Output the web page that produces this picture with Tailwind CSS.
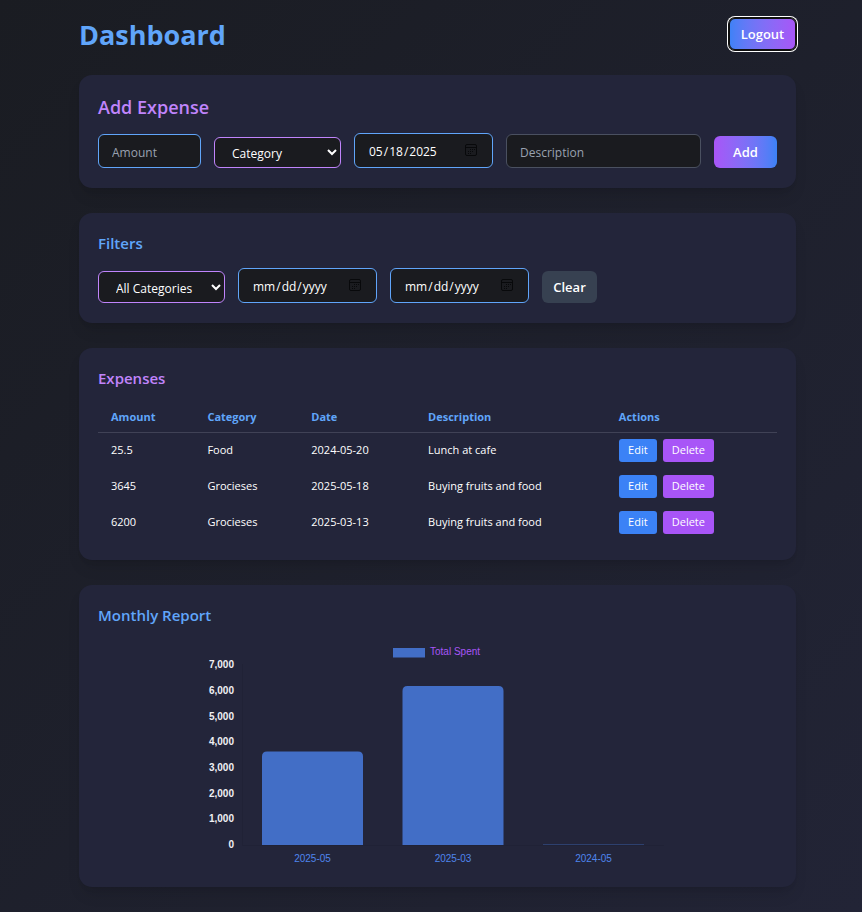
<!DOCTYPE html>
<html lang="en">
<head>
<meta charset="utf-8">
<meta name="viewport" content="width=device-width, initial-scale=1">
<title>Dashboard</title>
<script src="https://cdn.jsdelivr.net/npm/@tailwindcss/browser@4"></script>
</head>
<body class="min-h-screen bg-linear-to-br from-[#1a1c22] to-[#222436] font-['Open_Sans','Noto_Sans',sans-serif] text-[12px] text-white">
<svg class="hidden" aria-hidden="true">
  <symbol id="calendar" viewBox="0 0 14 14">
    <g fill="none" stroke="#08090b"><rect x="1.500" y="1.500" width="11" height="11" rx="1.500"/><path d="M1.500 4.500H12.500"/></g>
    <path fill="#08090b" d="M6 6h1v1H6zM8 6h1v1H8zM10 6h1v1h-1zM4 8h1v1H4zM6 8h1v1H6zM8 8h1v1H8zM4 10h1v1H4zM6 10h1v1H6z"/>
  </symbol>
</svg>
<div class="flex flex-col gap-[25px] pt-[18px] pr-[66px] pb-[25px] pl-[79px]">
  <header class="flex h-8 items-center justify-between">
    <h1 class="pt-[2px] text-[27px] leading-8 font-bold text-[#60a5fa]">Dashboard</h1>
    <button type="button" class="h-8 w-[67px] rounded-md border border-[#101010] bg-linear-to-r from-[#3b82f6] to-[#a855f7] bg-origin-border pt-[2px] text-[13px] font-semibold shadow-[0_0_0_1px_#101010,0_0_0_2px_#ffffff]">Logout</button>
  </header>

  <section class="rounded-[13px] bg-[#23253a] px-[19px] pt-[19px] pb-5 shadow-lg">
    <h2 class="mb-[13px] text-[18px] leading-[26px] font-semibold text-[#c084fc]">Add Expense</h2>
    <form class="flex items-end gap-[13px]">
      <input type="number" aria-label="Amount" placeholder="Amount" class="h-[34px] w-[103px] rounded-md border border-[#60a5fa] bg-[#1a1b1f] px-[13px] pt-[2px] placeholder:text-[#99a1af]">
      <select aria-label="Category" class="h-[31px] w-[127px] rounded-md border border-[#c084fc] bg-[#1a1b1f] pt-[2px] pl-[13px]">
        <option>Category</option><option>Food</option><option>Grocieses</option>
      </select>
      <div class="relative">
        <input type="date" aria-label="Date" value="2025-05-18" class="block h-[35px] w-[139px] rounded-md border border-[#60a5fa] bg-[#1a1b1f] px-[13px] pt-[2px] [&::-webkit-calendar-picker-indicator]:opacity-0">
        <svg class="pointer-events-none absolute top-[10px] right-[15px] size-[14px]" aria-hidden="true"><use href="#calendar"/></svg>
      </div>
      <input type="text" aria-label="Description" placeholder="Description" class="h-[34px] min-w-0 flex-1 rounded-md border border-[#4a5060] bg-[#1a1b1f] px-[13px] pt-[2px] placeholder:text-[#99a1af]">
      <button type="submit" class="h-8 w-[63px] rounded-md bg-linear-to-r from-[#a855f7] to-[#3b82f6] pt-[2px] text-[13px] font-semibold">Add</button>
    </form>
  </section>

  <section class="rounded-[13px] bg-[#23253a] px-[19px] pt-[19px] pb-5 shadow-lg">
    <h2 class="mb-[13px] text-[15px] leading-[23px] font-semibold text-[#60a5fa]">Filters</h2>
    <div class="flex items-end gap-[13px]">
      <select aria-label="Filter by category" class="h-8 w-[127px] rounded-md border border-[#c084fc] bg-[#1a1b1f] pt-[2px] pl-[13px]">
        <option>All Categories</option><option>Food</option><option>Grocieses</option>
      </select>
      <div class="relative">
        <input type="date" aria-label="From date" class="block h-[35px] w-[139px] rounded-md border border-[#60a5fa] bg-[#1a1b1f] px-[13px] pt-[2px] [&::-webkit-calendar-picker-indicator]:opacity-0">
        <svg class="pointer-events-none absolute top-[10px] right-[15px] size-[14px]" aria-hidden="true"><use href="#calendar"/></svg>
      </div>
      <div class="relative">
        <input type="date" aria-label="To date" class="block h-[35px] w-[139px] rounded-md border border-[#60a5fa] bg-[#1a1b1f] px-[13px] pt-[2px] [&::-webkit-calendar-picker-indicator]:opacity-0">
        <svg class="pointer-events-none absolute top-[10px] right-[15px] size-[14px]" aria-hidden="true"><use href="#calendar"/></svg>
      </div>
      <button type="button" class="h-8 w-[55px] rounded-md bg-[#374151] pt-[2px] text-[13px] font-semibold">Clear</button>
    </div>
  </section>

  <section class="rounded-[13px] bg-[#23253a] px-[19px] pt-[19px] pb-5 shadow-lg">
    <h2 class="mb-[13px] text-[15px] leading-[23px] font-semibold text-[#c084fc]">Expenses</h2>
    <table class="w-full table-fixed border-collapse text-left text-[11px]">
      <thead>
        <tr class="h-[29px] border-b border-[#404256] text-[#60a5fa]">
          <th class="w-[14.2%] px-[13px] font-bold">Amount</th>
          <th class="w-[15.3%] px-[13px] font-bold">Category</th>
          <th class="w-[17.2%] px-[13px] font-bold">Date</th>
          <th class="w-[28.1%] px-[13px] font-bold">Description</th>
          <th class="px-[13px] font-bold">Actions</th>
        </tr>
      </thead>
      <tbody>
        <tr class="h-9">
          <td class="px-[13px]">25.5</td><td class="px-[13px]">Food</td><td class="px-[13px]">2024-05-20</td><td class="px-[13px]">Lunch at cafe</td>
          <td class="px-[13px]"><div class="flex gap-[6px]"><button type="button" class="h-[23px] w-[38px] rounded-[3px] bg-[#3b82f6]">Edit</button><button type="button" class="h-[23px] w-[51px] rounded-[3px] bg-[#a855f7]">Delete</button></div></td>
        </tr>
        <tr class="h-9">
          <td class="px-[13px]">3645</td><td class="px-[13px]">Grocieses</td><td class="px-[13px]">2025-05-18</td><td class="px-[13px]">Buying fruits and food</td>
          <td class="px-[13px]"><div class="flex gap-[6px]"><button type="button" class="h-[23px] w-[38px] rounded-[3px] bg-[#3b82f6]">Edit</button><button type="button" class="h-[23px] w-[51px] rounded-[3px] bg-[#a855f7]">Delete</button></div></td>
        </tr>
        <tr class="h-9">
          <td class="px-[13px]">6200</td><td class="px-[13px]">Grocieses</td><td class="px-[13px]">2025-03-13</td><td class="px-[13px]">Buying fruits and food</td>
          <td class="px-[13px]"><div class="flex gap-[6px]"><button type="button" class="h-[23px] w-[38px] rounded-[3px] bg-[#3b82f6]">Edit</button><button type="button" class="h-[23px] w-[51px] rounded-[3px] bg-[#a855f7]">Delete</button></div></td>
        </tr>
      </tbody>
    </table>
  </section>

  <section class="rounded-[13px] bg-[#23253a] px-[19px] pt-[19px] pb-5 shadow-lg">
    <h2 class="mb-[13px] text-[15px] leading-[23px] font-semibold text-[#60a5fa]">Monthly Report</h2>
    <svg viewBox="0 0 461 227" role="img" aria-label="Total spent per month" class="mx-auto block w-full max-w-[461px] font-['Liberation_Sans',Arial,sans-serif] text-[10px]">
      <rect x="186" y="8" width="32" height="9.5" fill="#426ec6"/>
      <text x="223" y="15" fill="#a855f7">Total Spent</text>
      <path d="M35.5 24V205.5H457" fill="none" stroke="#202236"/>
      <g fill="#f0f0f4" text-anchor="end" class="font-bold">
        <text x="27" y="28">7,000</text><text x="27" y="54">6,000</text><text x="27" y="80">5,000</text><text x="27" y="105">4,000</text>
        <text x="27" y="131">3,000</text><text x="27" y="157">2,000</text><text x="27" y="182">1,000</text><text x="27" y="208">0</text>
      </g>
      <g fill="#426ec6">
        <path d="M55 205V116.500Q55 111.500 60 111.500H151Q156 111.500 156 116.500V205Z"/>
        <path d="M195.500 205V51Q195.500 46 200.500 46H291.500Q296.500 46 296.500 51V205Z"/>
        <path d="M336 204.300H437V205H336Z" opacity=".5"/>
      </g>
      <g fill="#4f86ee" text-anchor="middle">
        <text x="105.500" y="222">2025-05</text><text x="246" y="222">2025-03</text><text x="386.500" y="222">2024-05</text>
      </g>
    </svg>
  </section>
</div>
</body>
</html>
